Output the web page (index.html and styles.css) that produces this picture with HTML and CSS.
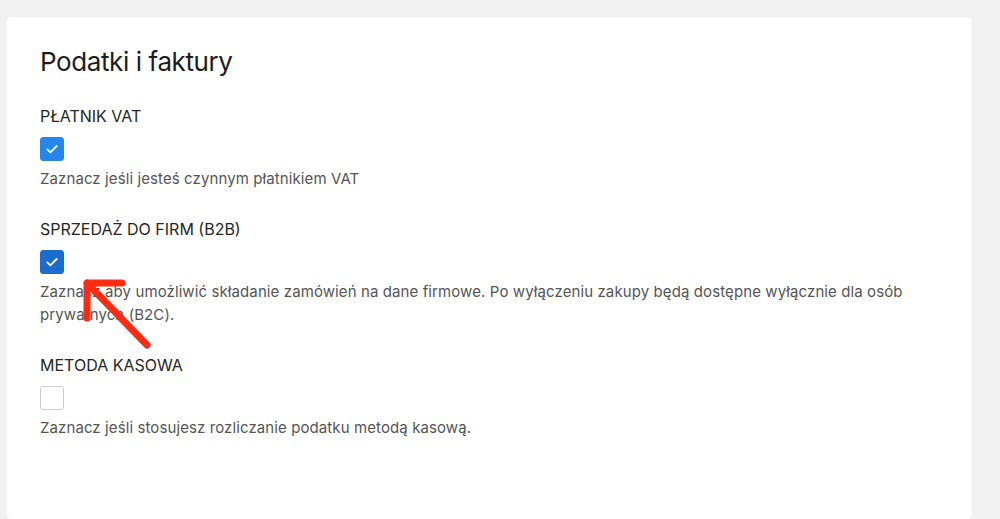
FILE: index.html
```html
<!DOCTYPE html>
<html lang="pl">
<head>
  <meta charset="utf-8">
  <title>Podatki i faktury</title>
  <link rel="stylesheet" href="styles.css">
</head>
<body>
  <div class="card">
    <h2>Podatki i faktury</h2>

    <div class="field">
      <label class="field-label">PŁATNIK VAT</label>
      <span class="checkbox checked">
        <svg viewBox="0 0 24 24" width="24" height="24"><path d="M7.3 12.4l3.1 3 6.3-6.4" /></svg>
      </span>
      <p class="hint">Zaznacz jeśli jesteś czynnym płatnikiem VAT</p>
    </div>

    <div class="field">
      <label class="field-label">SPRZEDAŻ DO FIRM (B2B)</label>
      <span class="checkbox checked focused">
        <svg viewBox="0 0 24 24" width="24" height="24"><path d="M7.3 12.4l3.1 3 6.3-6.4" /></svg>
      </span>
      <p class="hint">Zaznacz aby umożliwić składanie zamówień na dane firmowe. Po wyłączeniu zakupy będą dostępne wyłącznie dla osób prywatnych (B2C).</p>
      <svg class="arrow" viewBox="0 0 80 80" width="80" height="80">
        <path d="M8 8L68 70M8 8H43M8 8V43" />
      </svg>
    </div>

    <div class="field">
      <label class="field-label">METODA KASOWA</label>
      <span class="checkbox"></span>
      <p class="hint">Zaznacz jeśli stosujesz rozliczanie podatku metodą kasową.</p>
    </div>
  </div>
</body>
</html>
```

FILE: styles.css
```css
body {
  margin: 0;
  padding: 17px 28px 0 7px;
  background: #f1f1f1;
  font-family: Inter, "Open Sans", sans-serif;
  color: #222;
}
.card {
  background: #fff;
  border-radius: 5px;
  padding: 28px 33px 40px;
  min-height: 502px;
  box-sizing: border-box;
}
h2 {
  margin: 0 0 27px;
  font-size: 26px;
  font-weight: 400;
  line-height: 34px;
  letter-spacing: -0.4px;
  color: #1c1c1c;
}
.field {
  position: relative;
  margin-bottom: 29px;
}
.field-label {
  display: block;
  font-size: 16px;
  line-height: 20px;
  color: #262626;
  margin-bottom: 11px;
}
.checkbox {
  display: block;
  width: 24px;
  height: 24px;
  box-sizing: border-box;
  border: 1px solid #cfcfcf;
  border-radius: 3px;
  background: #fff;
}
.checkbox svg {
  display: block;
  margin: -1px;
}
.checkbox path {
  fill: none;
  stroke: #fff;
  stroke-width: 1.8;
  stroke-linecap: round;
  stroke-linejoin: round;
}
.checkbox.checked {
  background: #2586ec;
  border-color: #2586ec;
}
.checkbox.focused {
  background: #1a6dcd;
  border-color: #1a6dcd;
}
.hint {
  margin: 6px 0 0;
  font-size: 15px;
  line-height: 23px;
  letter-spacing: 0.1px;
  color: #555;
}
.arrow {
  position: absolute;
  left: 39px;
  top: 56px;
}
.arrow path {
  fill: none;
  stroke: #ff2a12;
  stroke-width: 7;
  stroke-linecap: round;
  stroke-linejoin: round;
}
```
